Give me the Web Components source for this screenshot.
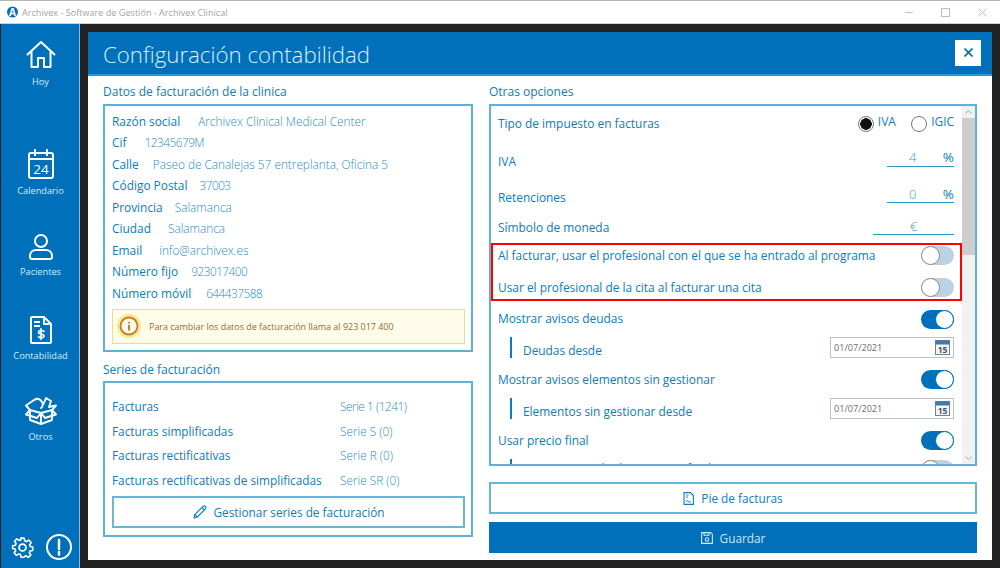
<!DOCTYPE html>
<html lang="es">
<head>
<meta charset="utf-8">
<title>Archivex</title>
<style>
  html, body { margin: 0; padding: 0; height: 100%; overflow: hidden; background: #222; }
  body { font-family: "Open Sans", "Liberation Sans", sans-serif; }
</style>
</head>
<body>
<archivex-app></archivex-app>

<script>
// icons used by nav items and buttons
const ICONS = {
  home: `<svg width="32" height="30" viewBox="0 0 32 30" fill="none" stroke="currentColor" stroke-width="2" stroke-linejoin="round" stroke-linecap="round"><path d="M2.500 14.500 16 2l13.500 12.500M6.500 11.500V27H13v-9h6v9h6.500V11.500"/></svg>`,
  calendar: `<svg width="26" height="30" viewBox="0 0 26 30" fill="none" stroke="currentColor" stroke-width="2"><rect x="1" y="4" width="24" height="25" rx="2"/><path d="M1 10h24M7 0v7M19 0v7"/><text x="13" y="25" font-size="13.500" text-anchor="middle" fill="currentColor" stroke="none" font-family="Open Sans">24</text></svg>`,
  user: `<svg width="24" height="26" viewBox="0 0 24 26" fill="none" stroke="currentColor" stroke-width="2"><circle cx="12" cy="7" r="6"/><path d="M7 16h10a6 6 0 0 1 6 5v2a2 2 0 0 1-2 2H3a2 2 0 0 1-2-2v-2a6 6 0 0 1 6-5z"/></svg>`,
  invoice: `<svg width="22" height="28" viewBox="0 0 22 28" fill="none" stroke="currentColor" stroke-width="2" stroke-linejoin="round"><path d="M2 1h12l7 7v18a1 1 0 0 1-1 1H2a1 1 0 0 1-1-1V2a1 1 0 0 1 1-1z"/><path d="M14 1v7h7M4 6h6M4 10h6"/><path d="M14 15.500c-1-1.500-5.500-1.500-5.500.7 0 2.600 5.500 1.200 5.500 3.800 0 2.300-4.500 2.300-5.500.7M11 12.500v11" stroke-width="1.600" stroke-linecap="round"/></svg>`,
  box: `<svg width="32" height="29" viewBox="0 0 32 29" fill="none" stroke="currentColor" stroke-width="1.900" stroke-linejoin="round" stroke-linecap="round"><path d="M5 15v9l11 4 11-4v-9M16 28V17M5 14l11 3 11-3"/><path d="M5 14 1 18.500l11 3.500 4-5 4 5 11-3.500L27 14"/><path d="M5 14 1 9.500 9 4c3-2 6-1 8 2 1.500 2 .5 5-1 6M18.500 8 21 2l5 3-2 6 7 -1.500L27 14"/></svg>`,
  gear: `<svg width="23" height="23" viewBox="0 0 24 24" fill="none" stroke="currentColor" stroke-width="1.900" stroke-linejoin="round"><circle cx="12" cy="12" r="3.600"/><path d="M10 1h4l.6 3.200 2 .9L19.400 3.300l2.800 2.800-1.800 2.800.9 2 2.700.6v4l-3.200.6-.8 2 1.800 2.700-2.800 2.800-2.700-1.800-2 .8L13.700 23.500h-3.400l-.6-3.200-2-.8-2.700 1.800-2.800-2.800 1.800-2.700-.8-2L.5 13.200V10l3.200-.6.8-2L2.700 4.700l2.800-2.800 2.700 1.800 2-.8z" transform="translate(1.300 1.300) scale(.89)"/></svg>`,
  alert: `<svg width="26" height="26" viewBox="0 0 26 26" fill="none" stroke="currentColor" stroke-width="2"><circle cx="13" cy="13" r="12"/><path d="M13 6v9M13 18v2.500" stroke-width="2.500" stroke-linecap="round"/></svg>`,
  pencil: `<svg width="14" height="14" viewBox="0 0 14 14" fill="none" stroke="currentColor" stroke-width="1.100" stroke-linejoin="round"><path d="M1 13l.8-3.400L10 1.400a1.500 1.500 0 0 1 2.400 2.400L4.300 12z"/><path d="M9 2.500l2.400 2.400M1.800 9.700l2.500 2.300"/></svg>`,
  footer: `<svg width="11" height="13" viewBox="0 0 11 13" fill="none" stroke="currentColor" stroke-width="1.100"><path d="M1 .6h6.500L10.400 3.500V12.400H1z"/><path d="M3 3h2.500M3 5h2M3 10l1.500-1.500L6 10h2" stroke-width=".9"/></svg>`,
  save: `<svg width="12" height="12" viewBox="0 0 12 12" fill="none" stroke="currentColor" stroke-width="1.100"><path d="M.6.6h9l1.800 1.800v9H.6z"/><path d="M3 .6v2.600h5V.6"/><circle cx="6" cy="7.500" r="1.700"/></svg>`
};

class AppTitlebar extends HTMLElement {
  connectedCallback() {
    this.attachShadow({ mode: 'open' });
    this.shadowRoot.innerHTML = `
      <style>
        :host {
          display: flex;
          align-items: center;
          height: 22px;
          padding-left: 7px;
          background: #fff;
          color: #a3a3a3;
          font-size: 9.100px;
          border-top: 1px solid #b5b5b5;
          border-bottom: 1px solid #cfcfcf;
        }
        .logo { margin-right: 4px; }
        .title { flex: 1; }
        .ctrl { width: 37px; display: flex; justify-content: center; }
        .ctrl:last-child { width: 36px; }
      </style>
      <svg class="logo" width="11" height="12" viewBox="0 0 11 12"><circle cx="5.500" cy="6" r="5.500" fill="#0b6fb5"/><text x="5.500" y="10" font-size="10" font-weight="700" fill="#fff" text-anchor="middle" font-family="Open Sans">A</text></svg>
      <span class="title"><slot></slot></span>
      <span class="ctrl"><svg width="8" height="8" viewBox="0 0 8 8" stroke="#c4c4c4"><path d="M0 4.500h8"/></svg></span>
      <span class="ctrl"><svg width="9" height="9" viewBox="0 0 9 9" fill="none" stroke="#bdbdbd"><rect x=".5" y=".5" width="8" height="8"/></svg></span>
      <span class="ctrl"><svg width="9" height="9" viewBox="0 0 9 9" stroke="#c4c4c4"><path d="M.5.500l8 8M8.500.500l-8 8"/></svg></span>
    `;
  }
}

class NavItem extends HTMLElement {
  connectedCallback() {
    this.attachShadow({ mode: 'open' });
    this.shadowRoot.innerHTML = `
      <style>
        :host {
          display: flex;
          flex-direction: column;
          align-items: center;
          justify-content: flex-end;
          color: #fff;
        }
        .label { color: #d3eefc; font-size: 9.200px; line-height: 14px; margin-top: 5px; }
        svg { display: block; }
      </style>
      ${ICONS[this.getAttribute('icon')]}
      <span class="label"><slot></slot></span>
    `;
  }
}

class AppSidebar extends HTMLElement {
  connectedCallback() {
    this.attachShadow({ mode: 'open' });
    this.shadowRoot.innerHTML = `
      <style>
        :host {
          display: flex;
          flex-direction: column;
          box-sizing: border-box;
          width: 79px;
          margin-left: 1px;
          background: #0070bb;
          border-right: 1px solid #7dbbe0;
        }
        .items { flex: 1; display: flex; flex-direction: column; padding-left: 1px; }
        .bottom { display: flex; justify-content: center; gap: 12px; color: #fff; padding-bottom: 8px; padding-left: 2px; }
        .bottom svg:first-child { margin-top: 2px; }
        ::slotted(nav-item:nth-child(1)) { height: 65px; }
        ::slotted(nav-item:nth-child(2)) { height: 109px; }
        ::slotted(nav-item:nth-child(3)) { height: 81px; }
        ::slotted(nav-item:nth-child(4)) { height: 84px; }
        ::slotted(nav-item:nth-child(5)) { height: 81px; }
      </style>
      <div class="items"><slot></slot></div>
      <div class="bottom">${ICONS.gear}${ICONS.alert}</div>
    `;
  }
}

class FormGroup extends HTMLElement {
  connectedCallback() {
    this.attachShadow({ mode: 'open' });
    this.shadowRoot.innerHTML = `
      <style>
        :host { display: block; color: #0a7dbd; }
        h3 { margin: 0; height: var(--h3-h, 21px); font-size: 12px; line-height: 18px; font-weight: 400; }
        .box {
          box-sizing: border-box;
          height: var(--box-h, auto);
          border: 2px solid #5eb2d8;
          padding: var(--box-pad, 6px 7px);
          overflow: hidden;
          position: relative;
        }
      </style>
      <h3>${this.getAttribute('heading')}</h3>
      <div class="box"><slot></slot></div>
    `;
  }
}

class InfoRow extends HTMLElement {
  connectedCallback() {
    this.attachShadow({ mode: 'open' });
    const tight = this.hasAttribute('tight');
    this.shadowRoot.innerHTML = `
      <style>
        :host { display: flex; gap: var(--gap, 17px); align-items: center; height: 21.500px; font-size: 11.900px; white-space: nowrap; }
        .value { color: #2a8cc4; font-weight: 300; font-size: 11.800px; ${tight ? 'letter-spacing: -.5px;' : ''} }
      </style>
      <span>${this.getAttribute('label')}</span>
      <span class="value"><slot></slot></span>
    `;
  }
}

class SerieRow extends HTMLElement {
  connectedCallback() {
    this.attachShadow({ mode: 'open' });
    const tight = this.hasAttribute('tight');
    this.shadowRoot.innerHTML = `
      <style>
        :host { display: grid; grid-template-columns: 228px 1fr; align-items: center; height: 24.500px; font-size: 11.800px; white-space: nowrap; }
        .value { color: #2a8cc4; font-weight: 300; ${tight ? 'letter-spacing: -.45px;' : ''} }
      </style>
      <span>${this.getAttribute('label')}</span>
      <span class="value"><slot></slot></span>
    `;
  }
}

class InfoNotice extends HTMLElement {
  connectedCallback() {
    this.attachShadow({ mode: 'open' });
    this.shadowRoot.innerHTML = `
      <style>
        :host {
          display: flex;
          align-items: center;
          gap: 8px;
          box-sizing: border-box;
          height: 35px;
          margin-top: 5px;
          padding-left: 4px;
          background: #fffde9;
          border: 1px solid #ecdd8b;
          color: #8f6c3c;
          font-size: 8.950px;
        }
      </style>
      <svg width="24" height="24" viewBox="0 0 24 24" fill="none"><circle cx="12" cy="12" r="12" fill="#fbe88e"/><circle cx="12" cy="12" r="8.500" fill="#fffbe8" stroke="#c17f2c" stroke-width="1.800"/><path d="M12 8v1.500M12 11v5.500" stroke="#c17f2c" stroke-width="2"/></svg>
      <span><slot></slot></span>
    `;
  }
}

class ActionButton extends HTMLElement {
  connectedCallback() {
    this.attachShadow({ mode: 'open' });
    const primary = this.hasAttribute('primary');
    this.shadowRoot.innerHTML = `
      <style>
        :host {
          display: flex;
          align-items: center;
          justify-content: center;
          gap: 7px;
          box-sizing: border-box;
          height: var(--btn-h, 32px);
          margin-top: var(--btn-mt, 0);
          border: 2px solid ${primary ? '#0070bb' : '#6ab6d8'};
          background: ${primary ? '#0070bb' : '#fff'};
          color: ${primary ? '#cde9fa' : '#0a7dbd'};
          font-size: 11.800px;
        }
        svg { display: block; }
      </style>
      ${ICONS[this.getAttribute('icon')]}
      <span><slot></slot></span>
    `;
  }
}

class OptionRow extends HTMLElement {
  connectedCallback() {
    this.attachShadow({ mode: 'open' });
    const sub = this.hasAttribute('sub');
    this.shadowRoot.innerHTML = `
      <style>
        :host {
          display: flex;
          align-items: center;
          justify-content: space-between;
          height: var(--row-h, 30px);
          margin-top: var(--row-mt, 0);
          padding: 0 var(--row-pr, 8px) 0 var(--row-pl, 7px);
          font-size: 11.900px;
          color: #0a7dbd;
          white-space: nowrap;
        }
        .label { display: flex; align-items: center; height: 21px; }
        .bar { width: 2px; height: 21px; background: #0a7dbd; margin: 0 11px 0 12px; }
        .text { margin-top: var(--lbl-mt, ${sub ? '5px' : '-2px'}); }
      </style>
      <span class="label">${sub ? '<i class="bar"></i>' : ''}<span class="text"><slot></slot></span></span>
      <slot name="control"></slot>
    `;
  }
}

class ToggleSwitch extends HTMLElement {
  connectedCallback() {
    this.attachShadow({ mode: 'open' });
    const on = this.hasAttribute('on');
    this.shadowRoot.innerHTML = `
      <style>
        :host {
          display: flex;
          justify-content: ${on ? 'flex-end' : 'flex-start'};
          align-items: center;
          box-sizing: border-box;
          width: 33px;
          height: 19px;
          border-radius: 10px;
          background: ${on ? '#0070bb' : '#bcd2e2'};
        }
        .knob {
          box-sizing: border-box;
          width: 19px;
          height: 19px;
          border-radius: 50%;
          background: #fff;
          border: 1.500px solid ${on ? '#0070bb' : '#8a8a8a'};
        }
      </style>
      <div class="knob"></div>
    `;
  }
}

class DateField extends HTMLElement {
  connectedCallback() {
    this.attachShadow({ mode: 'open' });
    this.shadowRoot.innerHTML = `
      <style>
        :host {
          display: flex;
          align-items: center;
          justify-content: space-between;
          box-sizing: border-box;
          width: 124px;
          height: 21px;
          padding: 0 3px 0 3px;
          border: 1.500px solid #bdc3c7;
          background: #fff;
          color: #66707a;
          font-size: 9.100px;
        }
        svg { display: block; }
      </style>
      <span><slot></slot></span>
      <svg width="15" height="15" viewBox="0 0 15 15"><rect x=".5" y=".5" width="14" height="14" fill="#f4f6f8" stroke="#6b8299"/><rect x=".5" y=".5" width="14" height="4" fill="#3f7cac"/><text x="7.500" y="13" text-anchor="middle" font-size="8.500" font-weight="700" fill="#4b5563" font-family="Open Sans">15</text></svg>
    `;
  }
}

class UnitField extends HTMLElement {
  connectedCallback() {
    this.attachShadow({ mode: 'open' });
    const unit = this.getAttribute('unit');
    this.shadowRoot.innerHTML = `
      <style>
        :host {
          display: flex;
          box-sizing: border-box;
          width: var(--field-w, 67px);
          height: 18px;
          align-items: center;
          justify-content: ${unit ? 'space-between' : 'center'};
          border-bottom: 1.500px solid #2d96c9;
          padding-left: ${unit ? '22px' : '0'};
          font-size: 13px;
          margin-top: var(--field-mt, -7px);
        }
        .value { color: #3f9acb; font-weight: 300; }
        .unit { color: #0a7dbd; font-size: 13.500px; }
      </style>
      <span class="value"><slot></slot></span>
      ${unit ? `<span class="unit">${unit}</span>` : ''}
    `;
  }
}

class TaxRadio extends HTMLElement {
  connectedCallback() {
    this.attachShadow({ mode: 'open' });
    const checked = this.hasAttribute('checked');
    this.shadowRoot.innerHTML = `
      <style>
        :host { display: inline-flex; align-items: center; gap: 4px; font-size: 11.900px; color: #0a7dbd; }
        .dot {
          box-sizing: border-box;
          width: 16px;
          height: 16px;
          margin-top: 3px;
          border-radius: 50%;
          border: 1px solid #777;
          background: ${checked ? 'radial-gradient(circle, #111 0 5.500px, #fff 6px)' : '#fff'};
        }
        span { margin-top: -3px; }
      </style>
      <div class="dot"></div>
      <span><slot></slot></span>
    `;
  }
}

class FakeScrollbar extends HTMLElement {
  connectedCallback() {
    this.attachShadow({ mode: 'open' });
    this.shadowRoot.innerHTML = `
      <style>
        :host {
          position: absolute;
          top: 0;
          right: 0;
          bottom: 0;
          width: 13px;
          background: #f1f1f1;
          display: flex;
          flex-direction: column;
          align-items: center;
        }
        svg { flex: none; margin: 4px 0; }
        .track { flex: 1; width: 100%; }
        .thumb { height: 137px; background: #cdcdcd; }
      </style>
      <svg width="7" height="4" viewBox="0 0 7 4" fill="none" stroke="#a6a6a6"><path d="M.5 3.500l3-3 3 3"/></svg>
      <div class="track"><div class="thumb"></div></div>
      <svg width="7" height="4" viewBox="0 0 7 4" fill="none" stroke="#a6a6a6"><path d="M.5.500l3 3 3-3"/></svg>
    `;
  }
}

class ConfigDialog extends HTMLElement {
  connectedCallback() {
    this.attachShadow({ mode: 'open' });
    this.shadowRoot.innerHTML = `
      <style>
        :host {
          display: flex;
          flex-direction: column;
          flex: none;
          width: 904px;
          height: 528px;
          margin: 8px 0 0 8px;
          background: #fff;
        }
        header {
          display: flex;
          align-items: center;
          justify-content: space-between;
          box-sizing: border-box;
          height: 44px;
          padding: 0 11px 0 15px;
          background: #0070bb;
          border-bottom: 2px solid #1e9ad6;
          color: #d8f0fd;
          font-size: 22.250px;
          font-weight: 300;
        }
        header span { margin-top: 3px; }
        .close {
          width: 26px;
          height: 26px;
          display: flex;
          align-items: center;
          justify-content: center;
          background: #fff;
          margin-top: -1px;
        }
        .body {
          flex: 1;
          display: grid;
          grid-template-columns: 370px 488px;
          column-gap: 16px;
          padding: 7px 0 0 15px;
        }
        .col { display: flex; flex-direction: column; }
      </style>
      <header>
        <span>${this.getAttribute('heading')}</span>
        <div class="close"><svg width="9" height="9" viewBox="0 0 9 9" stroke="#0a74bb" stroke-width="1.800"><path d="M.5.500l8 8M8.500.500l-8 8"/></svg></div>
      </header>
      <div class="body">
        <div class="col"><slot name="left"></slot></div>
        <div class="col"><slot name="right"></slot></div>
      </div>
    `;
  }
}

class RedHighlight extends HTMLElement {
  connectedCallback() {
    this.attachShadow({ mode: 'open' });
    this.shadowRoot.innerHTML = `
      <style>
        :host {
          display: block;
          box-sizing: border-box;
          width: 471px;
          height: 58px;
          border: 2px solid #f00;
          --row-pl: 5px;
          --row-pr: 6px;
        }
      </style>
      <slot></slot>
    `;
  }
}

class ArchivexApp extends HTMLElement {
  connectedCallback() {
    this.attachShadow({ mode: 'open' });
    this.shadowRoot.innerHTML = `
      <style>
        :host { display: flex; flex-direction: column; height: 568px; width: 1000px; overflow: hidden; }
        .main { flex: 1; display: flex; min-height: 0; }
        .stack { display: block; }
        .datos { --box-h: 248px; --box-pad: 4px 6px 0 7px; }
        .series { margin-top: 9px; --h3-h: 20px; --box-h: 156px; --box-pad: 11px 6px 0 7px; --btn-mt: 4px; }
        .opciones { --box-h: 362px; --box-pad: 0; }
        .opts { width: 471px; }
      </style>
      <app-titlebar>Archivex - Software de Gestión - Archivex Clinical</app-titlebar>
      <div class="main">
        <app-sidebar>
          <nav-item icon="home">Hoy</nav-item>
          <nav-item icon="calendar">Calendario</nav-item>
          <nav-item icon="user">Pacientes</nav-item>
          <nav-item icon="invoice">Contabilidad</nav-item>
          <nav-item icon="box">Otros</nav-item>
        </app-sidebar>
        <config-dialog heading="Configuración contabilidad">
          <div slot="left" class="stack">
            <form-group heading="Datos de facturación de la clinica" class="datos">
              <info-row label="Razón social" style="--gap: 18px">Archivex Clinical Medical Center</info-row>
              <info-row label="Cif" tight style="--gap: 18px">12345679M</info-row>
              <info-row label="Calle" style="--gap: 14px">Paseo de Canalejas 57 entreplanta, Oficina 5</info-row>
              <info-row label="Código Postal" tight style="--gap: 12px">37003</info-row>
              <info-row label="Provincia" style="--gap: 12px">Salamanca</info-row>
              <info-row label="Ciudad">Salamanca</info-row>
              <info-row label="Email">info@archivex.es</info-row>
              <info-row label="Número fijo" tight style="--gap: 13px">923017400</info-row>
              <info-row label="Número móvil" tight style="--gap: 15px">644437588</info-row>
              <info-notice>Para cambiar los datos de facturación llama al 923 017 400</info-notice>
            </form-group>
            <form-group heading="Series de facturación" class="series">
              <serie-row label="Facturas" tight>Serie 1 (1241)</serie-row>
              <serie-row label="Facturas simplificadas">Serie S (0)</serie-row>
              <serie-row label="Facturas rectificativas">Serie R (0)</serie-row>
              <serie-row label="Facturas rectificativas de simplificadas">Serie SR (0)</serie-row>
              <action-button icon="pencil">Gestionar series de facturación</action-button>
            </form-group>
          </div>
          <div slot="right" class="stack">
            <form-group heading="Otras opciones" class="opciones">
              <div class="opts">
                <option-row style="--row-h: 35px">Tipo de impuesto en facturas
                  <span slot="control"><tax-radio checked>IVA</tax-radio>&nbsp;&nbsp;&nbsp;&nbsp;&nbsp;<tax-radio>IGIC</tax-radio></span>
                </option-row>
                <option-row style="--row-h: 40px; --lbl-mt: 0">IVA<unit-field slot="control" unit="%">4</unit-field></option-row>
                <option-row style="--row-h: 33px">Retenciones<unit-field slot="control" unit="%">0</unit-field></option-row>
                <option-row style="--row-h: 29px; --lbl-mt: -4px; --field-mt: -5px">Símbolo de moneda<unit-field slot="control" style="--field-w: 81px">€</unit-field></option-row>
                <red-highlight>
                  <option-row style="--row-h: 21px">Al facturar, usar el profesional con el que se ha entrado al programa<toggle-switch slot="control"></toggle-switch></option-row>
                  <option-row style="--row-h: 24px; --row-mt: 9px; --lbl-mt: 0">Usar el profesional de la cita al facturar una cita<toggle-switch slot="control"></toggle-switch></option-row>
                </red-highlight>
                <option-row style="--row-h: 36px">Mostrar avisos deudas<toggle-switch slot="control" on></toggle-switch></option-row>
                <option-row sub style="--row-h: 21px">Deudas desde<date-field slot="control">01/07/2021</date-field></option-row>
                <option-row style="--row-h: 37px; --row-mt: 3px">Mostrar avisos elementos sin gestionar<toggle-switch slot="control" on></toggle-switch></option-row>
                <option-row sub style="--row-h: 21px">Elementos sin gestionar desde<date-field slot="control">01/07/2021</date-field></option-row>
                <option-row style="--row-h: 37px; --row-mt: 3px">Usar precio final<toggle-switch slot="control" on></toggle-switch></option-row>
                <option-row sub style="--row-h: 21px; --lbl-mt: -3px">Descuento incluido en precio final<toggle-switch slot="control"></toggle-switch></option-row>
              </div>
              <fake-scrollbar></fake-scrollbar>
            </form-group>
            <action-button icon="footer" style="--btn-mt: 16px">Pie de facturas</action-button>
            <action-button icon="save" primary style="--btn-mt: 8px; --btn-h: 31px">Guardar</action-button>
          </div>
        </config-dialog>
      </div>
    `;
  }
}

customElements.define('app-titlebar', AppTitlebar);
customElements.define('nav-item', NavItem);
customElements.define('app-sidebar', AppSidebar);
customElements.define('form-group', FormGroup);
customElements.define('info-row', InfoRow);
customElements.define('serie-row', SerieRow);
customElements.define('info-notice', InfoNotice);
customElements.define('action-button', ActionButton);
customElements.define('option-row', OptionRow);
customElements.define('toggle-switch', ToggleSwitch);
customElements.define('date-field', DateField);
customElements.define('unit-field', UnitField);
customElements.define('tax-radio', TaxRadio);
customElements.define('fake-scrollbar', FakeScrollbar);
customElements.define('red-highlight', RedHighlight);
customElements.define('config-dialog', ConfigDialog);
customElements.define('archivex-app', ArchivexApp);
</script>
</body>
</html>
